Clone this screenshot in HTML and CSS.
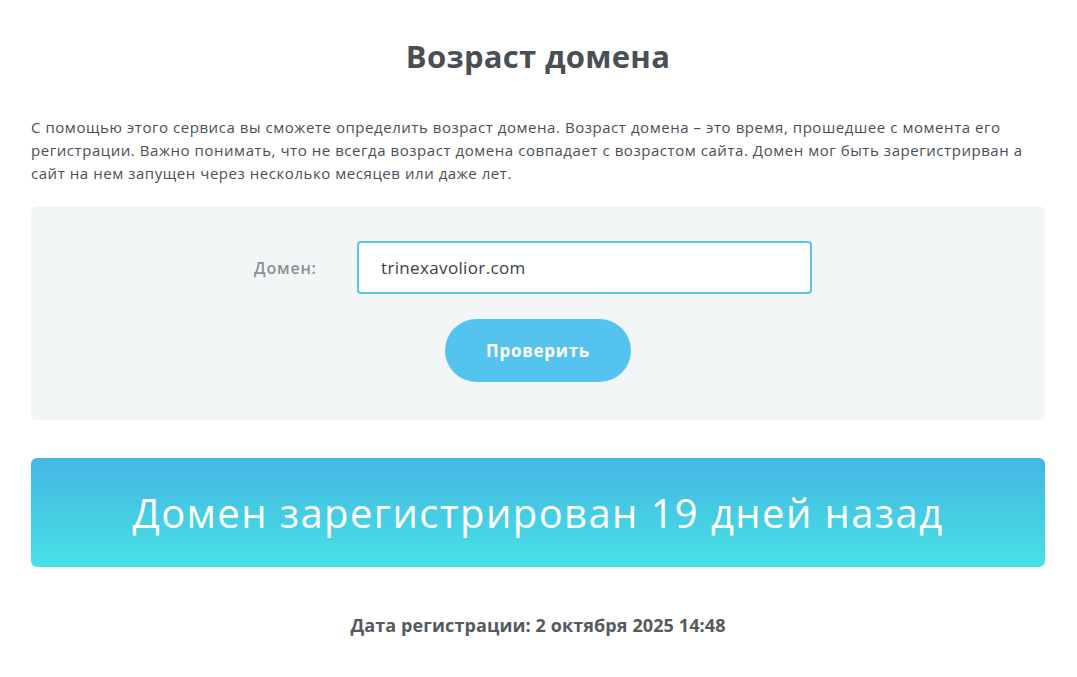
FILE: index.html
```html
<!DOCTYPE html>
<html lang="ru">
  <head>
    <meta charset="UTF-8" />
    <meta name="viewport" content="width=device-width, initial-scale=1.0" />
    <title>Возраст домена</title>
    <link rel="stylesheet" href="styles.css">
  </head>
  <body>
    <div class="container">
      <h1 class="title">Возраст домена</h1>

      <p class="intro">
        С помощью этого сервиса вы сможете определить возраст домена. Возраст домена – это время, прошедшее с момента его
        регистрации. Важно понимать, что не всегда возраст домена совпадает с возрастом сайта. Домен мог быть зарегистрирван а
        сайт на нем запущен через несколько месяцев или даже лет.
      </p>

      <form class="check-form" onsubmit="return false;">
        <div class="form-row">
          <label class="form-label" for="domain">Домен:</label>
          <input type="text" id="domain" class="domain-input" value="trinexavolior.com" autocomplete="off">
        </div>
        <button type="submit" class="check-btn">Проверить</button>
      </form>

      <div class="result">Домен зарегистрирован 19 дней назад</div>

      <div class="reg-date">Дата регистрации: 2 октября 2025 14:48</div>
    </div>
  </body>
</html>
```

FILE: styles.css
```css
* {
  margin: 0;
  padding: 0;
  box-sizing: border-box;
}

body {
  font-family: 'Open Sans', 'Noto Sans', sans-serif;
  background: #fff;
  color: #4a4f55;
}

.container {
  padding: 0 32px 0 31px;
}

.title {
  font-size: 31px;
  font-weight: 700;
  letter-spacing: 0.3px;
  color: #4a4f55;
  text-align: center;
  line-height: 40px;
  padding-top: 36px;
}

.intro {
  margin-top: 40px;
  font-size: 15px;
  letter-spacing: 0.55px;
  line-height: 23px;
  color: #4a4f55;
}

.check-form {
  margin-top: 21px;
  background: #f3f6f7;
  border-radius: 6px;
  padding: 35px 0 38px;
  display: flex;
  flex-direction: column;
  align-items: center;
  gap: 25px;
}

.form-row {
  display: flex;
  align-items: center;
  gap: 40px;
  padding-right: 10px;
}

.form-label {
  font-size: 16px;
  font-weight: 600;
  letter-spacing: 0.8px;
  color: #8c9094;
  width: 63px;
  white-space: nowrap;
}

.domain-input {
  width: 455px;
  height: 53px;
  border: 2px solid #5bc3ea;
  border-radius: 4px;
  padding: 0 22px;
  font-family: inherit;
  font-size: 17px;
  letter-spacing: 0.35px;
  color: #3a3e42;
  background: #fff;
  outline: none;
}

.check-btn {
  width: 186px;
  height: 63px;
  border: none;
  border-radius: 32px;
  background: #54c4ee;
  color: #fff;
  font-family: inherit;
  font-size: 17px;
  font-weight: 700;
  letter-spacing: 0.7px;
  cursor: pointer;
}

.result {
  margin-top: 38px;
  height: 109px;
  border-radius: 6px;
  background: linear-gradient(180deg, #45b6e4 0%, #46e2e4 100%);
  color: #fff;
  font-size: 40px;
  font-weight: 400;
  letter-spacing: 1.4px;
  display: flex;
  align-items: center;
  justify-content: center;
}

.reg-date {
  margin-top: 46px;
  text-align: center;
  font-size: 18px;
  font-weight: 700;
  letter-spacing: 0.1px;
  color: #555a5f;
}
```
